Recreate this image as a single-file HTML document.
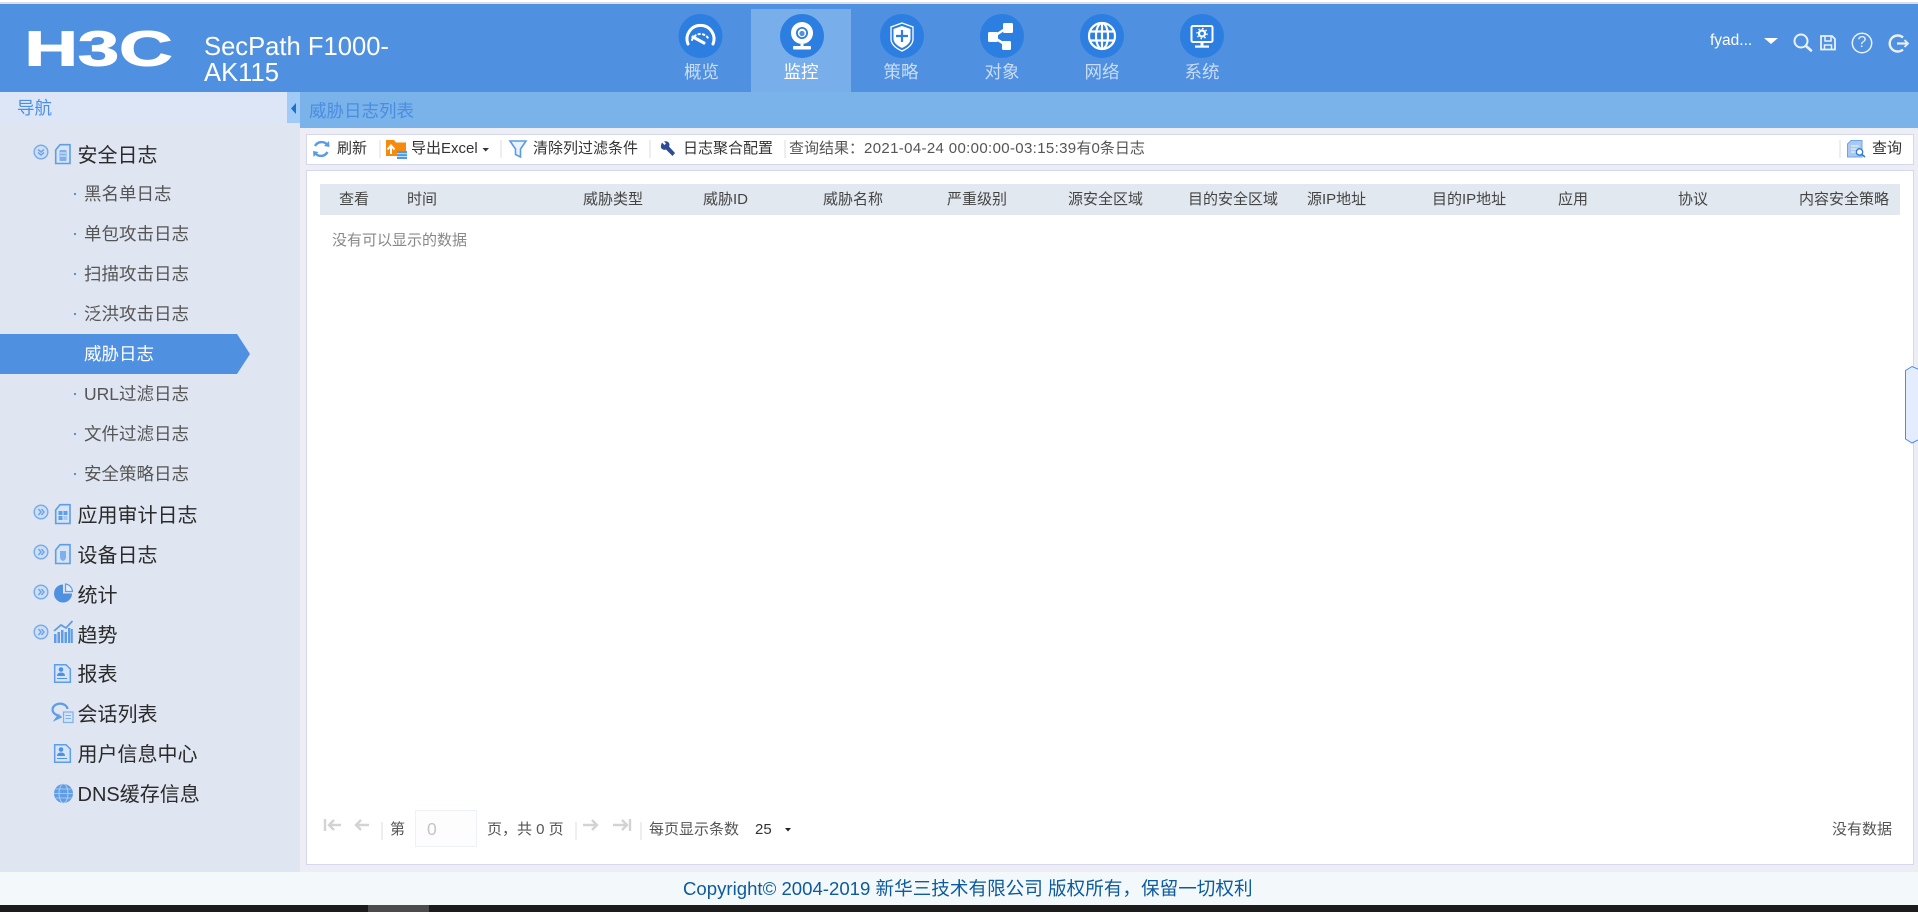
<!DOCTYPE html>
<html lang="zh-CN">
<head>
<meta charset="utf-8">
<title>SecPath F1000-AK115</title>
<style>
html,body{margin:0;padding:0;width:1918px;height:912px;overflow:hidden;background:#fff}
body{position:relative;font-family:"Liberation Sans","Noto Sans CJK SC",sans-serif;color:#333}
.b{position:absolute}
.t{position:absolute;white-space:nowrap;line-height:24px;height:24px}
.n{font-size:17.5px;color:#c8dcf6;width:100px;text-align:center}
.m{font-size:20px;color:#2a2a2a;left:77.5px}
.s{font-size:17.5px;color:#555;left:84px}
.d{position:absolute;left:74px;width:2px;height:2px;background:#4f91e0}
.h{font-size:15px;color:#444;top:188px}
.k{font-size:15px;color:#333}
.p{font-size:15px;color:#555}
.sep{position:absolute;width:2px;background:#eeeeee}
svg{position:absolute;left:0;top:0}
</style>
</head>
<body>
<!-- backgrounds -->
<div class="b" style="left:0;top:0;width:1918px;height:2px;background:#fff"></div>
<div class="b" style="left:0;top:2px;width:1918px;height:2px;background:#dcdfe3"></div>
<div class="b" style="left:0;top:4px;width:1918px;height:88px;background:#4f91e0"></div>
<div class="b" style="left:751px;top:9px;width:100px;height:83px;background:#78aeea"></div>
<div class="b" style="left:0;top:92px;width:300px;height:780px;background:#dfe5f1"></div>
<div class="b" style="left:0;top:92px;width:300px;height:32px;background:#dde6f7"></div>
<div class="b" style="left:287px;top:92px;width:13px;height:31px;background:#9fcbf6"></div>
<div class="b" style="left:300px;top:92px;width:1618px;height:780px;background:#ecedf5"></div>
<div class="b" style="left:300px;top:92px;width:1618px;height:36px;background:#7ab2ea"></div>
<div class="b" style="left:306px;top:134px;width:1606px;height:29px;background:#fff;border:1px solid #d5d7ec"></div>
<div class="b" style="left:306px;top:170px;width:1606px;height:693px;background:#fff;border:1px solid #d5d7ec"></div>
<div class="b" style="left:320px;top:184px;width:1580px;height:31px;background:#e2e8ef"></div>
<div class="b" style="left:0;top:872px;width:1918px;height:33px;background:#f3f9fb"></div>
<div class="b" style="left:0;top:905px;width:1918px;height:7px;background:#1c1c1c"></div>
<div class="b" style="left:368px;top:905px;width:61px;height:7px;background:#4b4b4b"></div>
<div class="b" style="left:0;top:334px;width:237px;height:40px;background:#4f91e0"></div>
<div class="b" style="left:415px;top:810px;width:60px;height:35px;background:#fdfdfd;border:1px solid #eef1f8"></div>

<div class="sep" style="left:379px;top:140px;height:18px"></div>
<div class="sep" style="left:500px;top:140px;height:18px"></div>
<div class="sep" style="left:649px;top:140px;height:18px"></div>
<div class="sep" style="left:784px;top:140px;height:18px"></div>
<div class="sep" style="left:1839px;top:140px;height:18px"></div>
<div class="sep" style="left:381px;top:822px;height:18px"></div>
<div class="sep" style="left:575px;top:822px;height:18px"></div>
<div class="sep" style="left:640px;top:822px;height:18px"></div>

<svg width="1918" height="912" viewBox="0 0 1918 912" xmlns="http://www.w3.org/2000/svg">
  <!-- logo -->
  <text x="24.500" y="65.500" font-family="Liberation Sans" font-weight="700" font-size="49" fill="#fff" stroke="#fff" stroke-width="1" textLength="148" lengthAdjust="spacingAndGlyphs">H3C</text>

  <!-- active sidebar arrow -->
  <polygon points="237,334 250,354 237,374" fill="#4f91e0"/>
  <!-- collapse triangle -->
  <polygon points="296,103 291,108.500 296,114" fill="#1d6fd4"/>

  <!-- nav circles -->
  <g fill="#2c7ee0">
    <circle cx="700.500" cy="36" r="22"/><circle cx="802" cy="36" r="22"/><circle cx="902" cy="36" r="22"/>
    <circle cx="1002" cy="36" r="22"/><circle cx="1102" cy="36" r="22"/><circle cx="1202" cy="36" r="22"/>
  </g>
  <!-- gauge -->
  <g fill="none" stroke="#fff" stroke-linecap="round">
    <path d="M688 44A13.500 13.500 0 1 1 713 44" stroke-width="3"/>
    <path d="M692 40A9 9 0 0 1 709 40" stroke-width="2" stroke-dasharray="1.500 3"/>
    <path d="M693 37L704 43" stroke-width="3"/>
  </g>
  <!-- webcam -->
  <circle cx="802" cy="33" r="11" fill="#fff"/>
  <circle cx="802" cy="33" r="6" fill="#2c7ee0"/>
  <circle cx="802" cy="33" r="4.200" fill="#fff"/>
  <circle cx="802" cy="33.500" r="2.600" fill="#4f91e0"/>
  <path d="M802 44V47" stroke="#fff" stroke-width="3"/>
  <rect x="793" y="46" width="18" height="3.500" rx="1" fill="#fff"/>
  <!-- shield -->
  <path d="M902 23L913 27V39Q913 46 902 51Q891 46 891 39V27Z" fill="none" stroke="#fff" stroke-width="1.300"/>
  <path d="M902 26L910.500 29V38.500Q910.500 44 902 48Q893.500 44 893.500 38.500V29Z" fill="#fff"/>
  <path d="M902 30V42M896 36H908" stroke="#2c7ee0" stroke-width="2.200"/>
  <!-- share -->
  <g fill="#fff">
    <rect x="1003" y="23" width="10" height="10" rx="1.500"/>
    <rect x="988" y="32" width="10" height="10" rx="1.500"/>
    <rect x="1002" y="41" width="9" height="9" rx="1.500"/>
  </g>
  <path d="M1005 29L993 37L1006 45" fill="none" stroke="#fff" stroke-width="2.500"/>
  <!-- globe -->
  <g fill="none" stroke="#fff" stroke-width="2.200">
    <circle cx="1102" cy="36" r="13"/>
    <ellipse cx="1102" cy="36" rx="6" ry="13"/>
    <path d="M1102 23V49M1090 31.500H1114M1090 40.500H1114"/>
  </g>
  <!-- monitor -->
  <rect x="1191.500" y="26" width="21" height="16" rx="1.500" fill="none" stroke="#fff" stroke-width="2"/>
  <circle cx="1202" cy="33.500" r="3" fill="none" stroke="#fff" stroke-width="2.200"/>
  <circle cx="1202" cy="33.500" r="5" fill="none" stroke="#fff" stroke-width="1.500" stroke-dasharray="1.500 2.400"/>
  <path d="M1202 42V46" stroke="#fff" stroke-width="3"/>
  <rect x="1195" y="45.500" width="14" height="2.200" fill="#fff"/>

  <!-- top right -->
  <polygon points="1764,38 1778,38 1771,44" fill="#fff"/>
  <g fill="none" stroke="#e9f1fc">
    <circle cx="1801" cy="41" r="6.500" stroke-width="2"/>
    <path d="M1806 46L1811 50.500" stroke-width="2.600" stroke-linecap="round"/>
    <path d="M1821 36H1832L1835 39V49.500H1821Z" stroke-width="1.800"/>
    <path d="M1825 36V41H1831V36M1824.500 49.500V45H1831.500V49.500" stroke-width="1.500"/>
    <circle cx="1862" cy="43" r="9.700" stroke-width="1.500"/>
    <path d="M1903 37.500A8 8 0 1 0 1903 49.500" stroke-width="2.400"/>
    <path d="M1897 43.500H1908" stroke-width="2.200"/>
    <path d="M1904.500 40L1908 43.500L1904.500 47" stroke-width="1.800"/>
  </g>

  <!-- sidebar toggles -->
  <g fill="#cfdff4" stroke="#79aeeb" stroke-width="1.500">
    <circle cx="41" cy="152" r="6.800"/><circle cx="41" cy="512" r="6.800"/><circle cx="41" cy="552" r="6.800"/>
    <circle cx="41" cy="592" r="6.800"/><circle cx="41" cy="632" r="6.800"/>
  </g>
  <g fill="none" stroke="#6fa5e8" stroke-width="1.500">
    <path d="M38 149.500L41 152L44 149.500M38 152.500L41 155L44 152.500"/>
    <path d="M38.500 509L41 512L38.500 515M41.500 509L44 512L41.500 515"/>
    <path d="M38.500 549L41 552L38.500 555M41.500 549L44 552L41.500 555"/>
    <path d="M38.500 589L41 592L38.500 595M41.500 589L44 592L41.500 595"/>
    <path d="M38.500 629L41 632L38.500 635M41.500 629L44 632L41.500 635"/>
  </g>

  <!-- doc icons -->
  <g fill="#d5e4f8" stroke="#5f9de6" stroke-width="1.600">
    <path d="M55.700 150L60 144.700H70V163.500H55.700Z"/>
    <path d="M55.700 510L60 504.700H70V523.500H55.700Z"/>
    <path d="M55.700 550L60 544.700H70V563.500H55.700Z"/>
  </g>
  <rect x="59.500" y="150" width="7" height="11" rx="1" fill="#7fb0ea"/>
  <path d="M60 153H66M60 156H66" stroke="#e6eef9"/>
  <g fill="#5f9de6"><rect x="58.500" y="511" width="4" height="4"/><rect x="63.500" y="511" width="4" height="4"/><rect x="58.500" y="516" width="4" height="4"/><rect x="63.500" y="516" width="4" height="4" fill="#a9c9f2"/></g>
  <path d="M60 551H66V557Q66 560 63 561Q60 560 60 557Z" fill="#7fb0ea"/>

  <!-- pie -->
  <path d="M63 584.500A9 9 0 1 0 72 593.500H63Z" fill="#4f91e0"/>
  <path d="M65.500 584V591.500H72.500A8 8 0 0 0 65.500 584Z" fill="#e6eef9" stroke="#5f9de6" stroke-width="1.200"/>

  <!-- trend -->
  <g fill="#5f9de6">
    <rect x="54" y="634" width="2.500" height="9"/><rect x="57.500" y="632" width="2.500" height="11"/>
    <rect x="61" y="630" width="2.500" height="13"/><rect x="64.500" y="632" width="2.500" height="11"/>
    <rect x="68" y="628" width="2.500" height="15"/><rect x="71" y="629" width="1.800" height="14"/>
  </g>
  <path d="M54 631L61 625L66 628L72.500 621" fill="none" stroke="#5f9de6" stroke-width="1.800"/>

  <!-- report & user -->
  <g fill="#d5e4f8" stroke="#5f9de6" stroke-width="1.500">
    <path d="M54.700 664.700H66L70.300 669V682.300H54.700Z"/>
    <path d="M54.700 744.700H66L70.300 749V762.300H54.700Z"/>
  </g>
  <g fill="#4f91e0">
    <circle cx="61" cy="669.500" r="2.300"/><path d="M57 676Q57 672.500 61 672.500Q65 672.500 65 676Z"/><rect x="57" y="678" width="10" height="1"/>
    <circle cx="61" cy="749.500" r="2.300"/><path d="M57 756Q57 752.500 61 752.500Q65 752.500 65 756Z"/><rect x="57" y="758" width="10" height="1"/>
  </g>

  <!-- chat -->
  <path d="M67.500 709A7.500 6 0 1 0 58.500 715.500L56 719L61.500 716.500" fill="none" stroke="#5f9de6" stroke-width="2.200"/>
  <rect x="63.500" y="712" width="9.500" height="10.500" fill="#d5e4f8" stroke="#7fb0ea" stroke-width="1.200"/>
  <path d="M65.500 715.500H71M65.500 718.500H71" stroke="#7fb0ea"/>

  <!-- DNS globe -->
  <circle cx="63.500" cy="793.500" r="9.500" fill="#5f9de6"/>
  <g fill="none" stroke="#bcd4f3" stroke-width=".8">
    <ellipse cx="63.500" cy="793.500" rx="4.500" ry="9.500"/>
    <path d="M54 793.500H73M55.500 789H71.500M55.500 798H71.500"/>
  </g>

  <!-- toolbar: refresh -->
  <g fill="none" stroke="#5b9be6" stroke-width="2.400">
    <path d="M315 146A7.500 7.500 0 0 1 327.500 145"/>
    <path d="M327.500 152A7.500 7.500 0 0 1 315 153"/>
  </g>
  <polygon points="329,141 329.500,147 324,146" fill="#5b9be6"/>
  <polygon points="313.500,157 313,151 318.500,152" fill="#5b9be6"/>
  <!-- export folder -->
  <path d="M386 140H394L396 142.500H406V156H386Z" fill="#f58a0d"/>
  <path d="M391 154V146.500M387.500 149.500L391 145.500L394.500 149.500" fill="none" stroke="#fff" stroke-width="2"/>
  <rect x="397" y="151" width="10" height="8" fill="#4d9ae6"/>
  <path d="M397 153.700H407M397 156.400H407" stroke="#d7e9fb" stroke-width=".9"/>
  <!-- caret -->
  <polygon points="482.500,148 489,148 485.700,151.500" fill="#333"/>
  <!-- filter -->
  <path d="M510 141H526L520.500 149V157L515.500 154.500V149Z" fill="#eaf2fc" stroke="#5b9be6" stroke-width="1.600"/>
  <!-- wrench -->
  <path d="M662 142.500L664.500 145L666 143.500L664 141.500Q667.500 140.500 669 143Q670 145 669 146.500L675 153L672.500 156L666 149.500Q663.500 150.500 661.500 148.500Q660 146.500 662 142.500Z" fill="#2e4b95"/>
  <!-- query icon -->
  <path d="M1847.500 144L1851 140.500H1862V157H1847.500Z" fill="#a9c9f0" stroke="#6da5e9"/>
  <path d="M1851 146H1859M1851 149H1857M1851 152H1856" stroke="#f0f6fd"/>
  <circle cx="1859.500" cy="152" r="3.200" fill="#fff" stroke="#2f79d6" stroke-width="1.300"/>
  <path d="M1862 154.500L1865 157" stroke="#2f79d6" stroke-width="1.500"/>

  <!-- pagination icons -->
  <g fill="none" stroke="#d3d3d3" stroke-width="2.400">
    <path d="M325 819V831"/>
    <path d="M341 825H329M334 820L329 825L334 830"/>
    <path d="M369 825H356M361 820L356 825L361 830"/>
    <path d="M583 825H597M592 820L597 825L592 830"/>
    <path d="M613 825H627M622 820L627 825L622 830"/>
    <path d="M630 819V831"/>
  </g>
  <polygon points="785,828 791,828 788,831.500" fill="#222"/>

  <!-- right handle -->
  <path d="M1918 369L1912 366.500L1905.500 370.500V439L1912 443L1918 440" fill="#e4edfe" stroke="#4d88f0" stroke-width="1"/>
</svg>

<!-- header text -->
<div class="t" style="left:204px;top:34px;font-size:25.600px;color:#fff;line-height:27px;height:27px">SecPath F1000-</div>
<div class="t" style="left:204px;top:60px;font-size:25.600px;color:#fff;line-height:27px;height:27px">AK115</div>
<div class="t n" style="left:651.500px;top:60px">概览</div>
<div class="t n" style="left:751px;top:60px;color:#fff">监控</div>
<div class="t n" style="left:851px;top:60px">策略</div>
<div class="t n" style="left:952px;top:60px">对象</div>
<div class="t n" style="left:1052px;top:60px">网络</div>
<div class="t n" style="left:1152px;top:60px">系统</div>
<div class="t" style="left:1710px;top:29px;font-size:15.500px;color:#fff">fyad...</div>
<div class="t" style="left:1857.500px;top:31px;font-size:16px;color:#e9f1fc">?</div>

<!-- sidebar -->
<div class="t" style="left:17px;top:96px;font-size:17.500px;color:#4b8fe3">导航</div>
<div class="t m" style="top:144px">安全日志</div>
<div class="d" style="top:193px"></div><div class="t s" style="top:182px">黑名单日志</div>
<div class="d" style="top:233px"></div><div class="t s" style="top:222px">单包攻击日志</div>
<div class="d" style="top:273px"></div><div class="t s" style="top:262px">扫描攻击日志</div>
<div class="d" style="top:313px"></div><div class="t s" style="top:302px">泛洪攻击日志</div>
<div class="d" style="top:353px"></div><div class="t s" style="top:342px;color:#fff">威胁日志</div>
<div class="d" style="top:393px"></div><div class="t s" style="top:382px">URL过滤日志</div>
<div class="d" style="top:433px"></div><div class="t s" style="top:422px">文件过滤日志</div>
<div class="d" style="top:473px"></div><div class="t s" style="top:462px">安全策略日志</div>
<div class="t m" style="top:504px">应用审计日志</div>
<div class="t m" style="top:544px">设备日志</div>
<div class="t m" style="top:584px">统计</div>
<div class="t m" style="top:624px">趋势</div>
<div class="t m" style="top:663px">报表</div>
<div class="t m" style="top:703px">会话列表</div>
<div class="t m" style="top:743px">用户信息中心</div>
<div class="t m" style="top:783px">DNS缓存信息</div>

<!-- title -->
<div class="t" style="left:309px;top:99px;font-size:17.500px;color:#4a8de0">威胁日志列表</div>

<!-- toolbar -->
<div class="t k" style="left:337px;top:137px">刷新</div>
<div class="t k" style="left:411px;top:137px">导出Excel</div>
<div class="t k" style="left:533px;top:137px">清除列过滤条件</div>
<div class="t k" style="left:683px;top:137px">日志聚合配置</div>
<div class="t p" style="left:789px;top:137px">查询结果：<span style="letter-spacing:.35px">2021-04-24 00:00:00-03:15:39</span>有0条日志</div>
<div class="t k" style="left:1872px;top:137px">查询</div>

<!-- table head -->
<div class="t h" style="left:339px">查看</div>
<div class="t h" style="left:407px">时间</div>
<div class="t h" style="left:583px">威胁类型</div>
<div class="t h" style="left:703px">威胁ID</div>
<div class="t h" style="left:823px">威胁名称</div>
<div class="t h" style="left:947px">严重级别</div>
<div class="t h" style="left:1068px">源安全区域</div>
<div class="t h" style="left:1188px">目的安全区域</div>
<div class="t h" style="left:1307px">源IP地址</div>
<div class="t h" style="left:1432px">目的IP地址</div>
<div class="t h" style="left:1558px">应用</div>
<div class="t h" style="left:1678px">协议</div>
<div class="t h" style="left:1799px">内容安全策略</div>
<div class="t" style="left:332px;top:229px;font-size:15px;color:#888">没有可以显示的数据</div>

<!-- pagination -->
<div class="t p" style="left:390px;top:818px">第</div>
<div class="t" style="left:427px;top:817px;font-size:17.500px;color:#c4c4c4">0</div>
<div class="t p" style="left:487px;top:818px">页，共 0 页</div>
<div class="t p" style="left:649px;top:818px">每页显示条数</div>
<div class="t k" style="left:755px;top:818px">25</div>
<div class="t p" style="left:1832px;top:818px">没有数据</div>

<!-- footer -->
<div class="t" style="left:683px;top:877px;font-size:18.600px;color:#0d5a9e">Copyright© 2004-2019 新华三技术有限公司 版权所有，保留一切权利</div>
</body>
</html>
